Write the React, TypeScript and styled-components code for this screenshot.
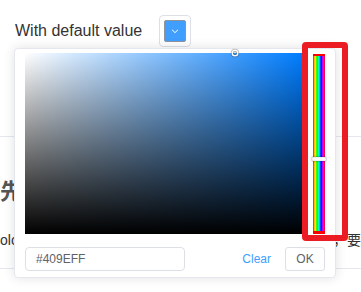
import React from "react";
import styled, { createGlobalStyle } from "styled-components";

const GlobalStyle = createGlobalStyle`
  html, body { margin: 0; padding: 0; background: #fff; overflow: hidden; }
  body { font-family: "Liberation Sans", Arial, "Noto Sans CJK SC", sans-serif; }
  * { box-sizing: border-box; }
`;

const Page = styled.div`
  position: relative;
  width: 361px;
  height: 292px;
  overflow: hidden;
  padding-top: 15px;
  display: flex;
  flex-direction: column;
`;

const DemoRow = styled.div`
  display: flex;
  align-items: center;
  height: 32px;
  padding-left: 15px;
  gap: 17px;
`;

const Label = styled.span`
  font-size: 16px;
  color: #333;
  white-space: nowrap;
`;

const Trigger = styled.div`
  width: 32px;
  height: 32px;
  padding: 4px;
  border: 1px solid #dcdfe6;
  border-radius: 4px;
  display: flex;
`;

const ColorBox = styled.div<{ $color: string }>`
  flex: 1;
  border: 1px solid #909399;
  border-radius: 2px;
  background: ${(p) => p.$color};
  display: flex;
  align-items: center;
  justify-content: center;
`;

const Divider = styled.div<{ $top: number }>`
  height: 1px;
  background: #e4e7ed;
  margin-top: ${(p) => p.$top}px;
  flex-shrink: 0;
`;

const Heading = styled.h3`
  margin: 40px 0 0 0;
  font-size: 22px;
  line-height: 30px;
  font-weight: bold;
  color: #555;
  white-space: nowrap;
`;

const TextRow = styled.div`
  display: flex;
  margin-top: 22px;
  font-size: 14px;
  line-height: 22px;
  color: #333;
  white-space: nowrap;
`;

const RightText = styled.span`
  margin-left: auto;
  flex-shrink: 0;
`;

const Dropdown = styled.div`
  position: absolute;
  left: 14px;
  top: 48px;
  width: 322px;
  padding: 4px 10px 6px;
  background: #fff;
  border: 1px solid #e4e7ed;
  border-radius: 4px;
  box-shadow: 0 0 12px rgba(0, 0, 0, 0.12);
  display: flex;
  flex-direction: column;
  gap: 13px;
`;

const Main = styled.div`
  display: flex;
  justify-content: space-between;
  align-items: flex-start;
`;

const SvPanel = styled.div<{ $hue: number }>`
  position: relative;
  width: 277px;
  height: 181px;
  background: hsl(${(p) => p.$hue}, 100%, 50%);
  &::before, &::after {
    content: "";
    position: absolute;
    inset: 0;
  }
  &::before { background: linear-gradient(to right, #fff, rgba(255, 255, 255, 0)); }
  &::after { background: linear-gradient(to top, #000, rgba(0, 0, 0, 0)); }
`;

const Cursor = styled.div`
  position: absolute;
  width: 4px;
  height: 4px;
  border-radius: 4px;
  transform: translate(-2px, -2px);
  z-index: 1;
  box-shadow: 0 0 0 1.5px #fff, inset 0 0 1px 1px rgba(0, 0, 0, 0.3), 0 0 1px 2px rgba(0, 0, 0, 0.4);
`;

const HueSlider = styled.div`
  position: relative;
  width: 12px;
  height: 180px;
  margin-top: 1px;
  background:
    linear-gradient(to bottom, #f00 0, #f00 2px, transparent 2px, transparent calc(100% - 3px), #f00 calc(100% - 3px)),
    linear-gradient(to right, #f00 0%, #ff0 17%, #0f0 33%, #0ff 50%, #00f 67%, #f0f 83%, #f00 100%);
`;

const HueThumb = styled.div`
  position: absolute;
  left: -1px;
  width: 14px;
  height: 4px;
  border-radius: 1px;
  background: #fff;
  border: 1px solid #f0f0f0;
  box-shadow: 0 0 2px rgba(0, 0, 0, 0.6);
`;

const Footer = styled.div`
  display: flex;
  align-items: center;
  justify-content: space-between;
`;

const ValueInput = styled.div`
  width: 160px;
  height: 24px;
  border: 1px solid #dcdfe6;
  border-radius: 4px;
  padding: 0 10px;
  font-size: 12px;
  line-height: 22px;
  color: #606266;
`;

const Actions = styled.div`
  display: flex;
  align-items: center;
  gap: 14px;
`;

const TextButton = styled.button`
  border: none;
  background: none;
  padding: 0;
  font-family: inherit;
  font-size: 12px;
  color: #409eff;
`;

const PlainButton = styled.button`
  width: 40px;
  height: 24px;
  padding: 0;
  border: 1px solid #dcdfe6;
  border-radius: 3px;
  background: #fff;
  font-family: inherit;
  font-size: 12px;
  color: #606266;
`;

const Highlight = styled.div`
  position: absolute;
  left: 302px;
  top: 42px;
  width: 46px;
  height: 199px;
  border: 6px solid #ec1c24;
  border-radius: 4px;
  pointer-events: none;
`;

export default function App() {
  const hue = 210.5;
  return (
    <>
      <GlobalStyle />
      <Page>
        <DemoRow>
          <Label>With default value</Label>
          <Trigger>
            <ColorBox $color="#409EFF">
              <svg width="10" height="10" viewBox="0 0 10 10">
                <path d="M2 3.8 L5 6.6 L8 3.8" fill="none" stroke="#fff" strokeWidth="1" />
              </svg>
            </ColorBox>
          </Trigger>
        </DemoRow>
        <Divider $top={89} />
        <Heading>先决条件</Heading>
        <TextRow>
          <span>olor picker</span>
          <RightText>，要</RightText>
        </TextRow>
        <Divider $top={17} />

        <Dropdown>
          <Main>
            <SvPanel $hue={hue}>
              <Cursor style={{ left: 210, top: 0 }} />
            </SvPanel>
            <HueSlider>
              <HueThumb style={{ top: (hue / 360) * 180 - 2 }} />
            </HueSlider>
          </Main>
          <Footer>
            <ValueInput>#409EFF</ValueInput>
            <Actions>
              <TextButton>Clear</TextButton>
              <PlainButton>OK</PlainButton>
            </Actions>
          </Footer>
        </Dropdown>
        <Highlight />
      </Page>
    </>
  );
}
